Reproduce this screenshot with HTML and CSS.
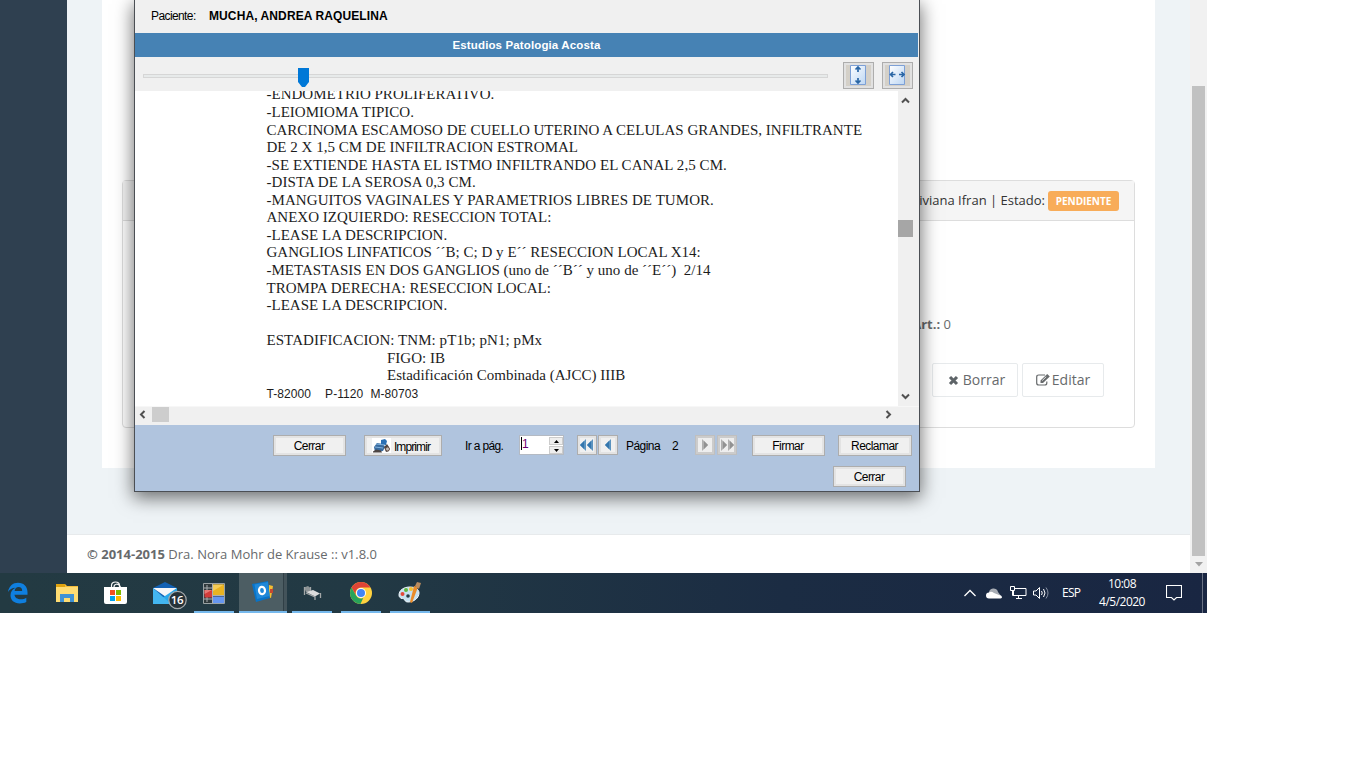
FILE: index.html
```html
<!DOCTYPE html>
<html lang="es">
<head>
<meta charset="utf-8">
<title>Estudios Patologia Acosta</title>
<link rel="stylesheet" href="styles.css">
</head>
<body>
<div class="desktop">
  <div class="browser">
    <aside class="sidebar"></aside>
    <main class="page">
      <div class="panel">
        <section class="card">
          <header class="card-head"><span class="owner">Viviana Ifran | Estado:</span><span class="badge">PENDIENTE</span></header>
          <div class="card-body">
            <p class="art"><b>Art.:</b> 0</p>
            <div class="actions">
              <button class="web-btn borrar"><svg width="11" height="11" viewBox="0 0 11 11"><path d="M2 2l7 7M9 2l-7 7" stroke="#5e6468" stroke-width="3.1"/></svg><span>Borrar</span></button>
              <button class="web-btn editar"><svg width="14" height="12" viewBox="0 0 14 12"><path d="M9 1H2.8Q.7 1 .7 3v6q0 2 2.1 2h6q2 0 2-2V7.5" fill="none" stroke="#676a6c" stroke-width="1.2"/><path d="M4.500 9V6.500L11.200 0l2.600 2.500L7 9z" fill="#676a6c"/><path d="M6.200 6.600l4-3.900" stroke="#fff" stroke-width=".8"/></svg><span>Editar</span></button>
            </div>
          </div>
        </section>
      </div>
      <footer class="page-foot"><span><b>© 2014-2015</b> Dra. Nora Mohr de Krause :: v1.8.0</span></footer>
    </main>
    <div class="page-scroll"><div class="page-thumb"></div><svg width="8" height="5" viewBox="0 0 8 5"><path d="M0 0h8L4 4.5z" fill="#a3a3a3"/></svg></div>
  </div>

  <div class="dialog">
    <div class="patient"><span class="p-label">Paciente:</span><b class="p-name">MUCHA, ANDREA RAQUELINA</b></div>
    <h1 class="title"><span>Estudios Patologia Acosta</span></h1>
    <div class="zoom-row">
      <div class="track"><svg class="handle" width="11" height="19" viewBox="0 0 11 19"><path d="M0 0h11v14l-4 5H4l-4-5z" fill="#0078d7"/></svg></div>
      <button class="fit fit-v"><svg width="25" height="21" viewBox="0 0 25 21"><defs><linearGradient id="sheet" x2="1" y2="1"><stop offset="0" stop-color="#fff"/><stop offset="1" stop-color="#bcd6f3"/></linearGradient></defs><path d="M0 0h25v21H0z" fill="#d4d0c8"/><path d="M4.500.5h15v19h-15z" fill="url(#sheet)" stroke="#7da0d6"/><path d="M12 2v5M9.500 4.500L12 2l2.500 2.500M12 13v5M9.500 15.500L12 18l2.500-2.500" fill="none" stroke="#2a66a5" stroke-width="1.700"/></svg></button>
      <button class="fit fit-h"><svg width="25" height="21" viewBox="0 0 25 21"><path d="M0 0h25v21H0z" fill="#d4d0c8"/><path d="M4.500.5h15v19h-15z" fill="url(#sheet)" stroke="#7da0d6"/><path d="M5.500 9.500h5M8 7L5.500 9.500 8 12M14 9.500h5M16.500 7L19 9.500 16.500 12" fill="none" stroke="#2a66a5" stroke-width="1.700"/></svg></button>
    </div>
    <div class="viewer">
      <div class="doc">
        <p><span>-ENDOMETRIO PROLIFERATIVO.</span></p>
        <p><span>-LEIOMIOMA TIPICO.</span></p>
        <p><span>CARCINOMA ESCAMOSO DE CUELLO UTERINO A CELULAS GRANDES, INFILTRANTE</span></p>
        <p><span>DE 2 X 1,5 CM DE INFILTRACION ESTROMAL</span></p>
        <p class="loose"><span>-SE EXTIENDE HASTA EL ISTMO INFILTRANDO EL CANAL 2,5 CM.</span></p>
        <p class="loose"><span>-DISTA DE LA SEROSA 0,3 CM.</span></p>
        <p class="loose"><span>-MANGUITOS VAGINALES Y PARAMETRIOS LIBRES DE TUMOR.</span></p>
        <p><span>ANEXO IZQUIERDO: RESECCION TOTAL:</span></p>
        <p><span>-LEASE LA DESCRIPCION.</span></p>
        <p><span>GANGLIOS LINFATICOS ´´B; C; D y E´´ RESECCION LOCAL X14:</span></p>
        <p><span>-METASTASIS EN DOS GANGLIOS (uno de ´´B´´ y uno de ´´E´´)&nbsp; 2/14</span></p>
        <p><span>TROMPA DERECHA: RESECCION LOCAL:</span></p>
        <p><span>-LEASE LA DESCRIPCION.</span></p>
        <p>&nbsp;</p>
        <p class="loose"><span>ESTADIFICACION: TNM: pT1b; pN1; pMx</span></p>
        <p class="in"><span>FIGO: IB</span></p>
        <p class="in"><span>Estadificación Combinada (AJCC) IIIB</span></p>
        <p class="codes"><span>T-82000</span><span>P-1120</span><span>M-80703</span></p>
      </div>
      <div class="vscroll">
        <svg width="9" height="7" viewBox="0 0 9 7"><path d="M1 5.500l3.500-3.500L8 5.500" fill="none" stroke="#505050" stroke-width="2"/></svg>
        <div class="vthumb"></div>
        <svg width="9" height="7" viewBox="0 0 9 7"><path d="M1 1.500L4.500 5 8 1.500" fill="none" stroke="#505050" stroke-width="2"/></svg>
      </div>
    </div>
    <div class="hscroll">
      <svg width="7" height="9" viewBox="0 0 7 9"><path d="M5.500 1L2 4.500 5.500 8" fill="none" stroke="#505050" stroke-width="2"/></svg>
      <div class="hthumb"></div>
      <svg width="7" height="9" viewBox="0 0 7 9"><path d="M1.500 1L5 4.500 1.500 8" fill="none" stroke="#505050" stroke-width="2"/></svg>
    </div>
    <div class="bar">
      <div class="bar-row">
        <button class="btn w-std"><span>Cerrar</span></button>
        <button class="btn w-print"><svg width="19" height="15" viewBox="0 0 19 15"><path d="M0 0h19v15H0z" fill="#fff"/><path d="M2 9l3-4 6 1 2 3-2 4-8 1z" fill="#396b9f"/><path d="M9 2l4-1 2 2-1 4H9z" fill="#2b70b4"/><path d="M4 6l9 1M3 9l8 1" stroke="#81b2dd"/><path d="M1 13.500l3-2 5 1 1 2H1zM12 9l3-3 2 3v4l-3 1" fill="#4c4442"/><circle cx="15.500" cy="11" r="2" fill="#c5bdb6" stroke="#665048"/></svg><span class="print-label">Imprimir</span></button>
        <label class="goto">Ir a pág.</label>
        <div class="spinner"><span class="val">1</span><div class="steps"><i><svg width="5" height="3" viewBox="0 0 5 3"><path d="M0 3h5L2.500 0z"/></svg></i><i><svg width="5" height="3" viewBox="0 0 5 3"><path d="M0 0h5L2.500 3z"/></svg></i></div></div>
        <button class="nav first"><svg width="14" height="12" viewBox="0 0 14 12"><path d="M6 0v12L0 6zM13 0v12L7 6z" fill="#5b93bf"/><path d="M4 2v8L0 6zM11 2v8L7 6z" fill="#3476ad"/></svg></button>
        <button class="nav prev"><svg width="8" height="12" viewBox="0 0 8 12"><path d="M7 0v12L1 6z" fill="#5b93bf"/><path d="M5 2v8L1 6z" fill="#3476ad"/></svg></button>
        <span class="pg">Página</span><span class="pgn">2</span>
        <button class="nav off next"><svg width="8" height="12" viewBox="0 0 8 12"><path d="M1 0v12l6-6z" fill="#b0b0b0"/><path d="M3 2v8l4-4z" fill="#929292"/></svg></button>
        <button class="nav off last"><svg width="14" height="12" viewBox="0 0 14 12"><path d="M1 0v12l6-6zM8 0v12l6-6z" fill="#b0b0b0"/><path d="M3 2v8l4-4zM10 2v8l4-4z" fill="#929292"/></svg></button>
        <button class="btn w-std firmar"><span>Firmar</span></button>
        <button class="btn w-rec"><span>Reclamar</span></button>
      </div>
      <div class="bar-row second"><button class="btn w-std"><span>Cerrar</span></button></div>
    </div>
  </div>

  <div class="taskbar">
    <div class="apps">
      <div class="app"><svg width="22" height="22" viewBox="0 0 22 22"><path d="M1 10C2 4 6 .8 11 .8c6 0 9.500 4 9.500 9.500v2.500H7.500c.3 3 3 4.500 6.300 4.500 2 0 4-.6 5.500-1.600v4.400c-2 1-4 1.300-6.500 1.300C7 21.400 3.500 18 3.500 13.200c0-3.400 2-6.200 5-7.500C5 5.800 2.500 7.500 1 10zM7.600 9h7.600c0-2.500-1.300-4-3.600-4-2.200 0-3.600 1.600-4 4z" fill="#0f7fdf"/></svg></div>
      <div class="app"><svg width="22" height="18" viewBox="0 0 22 18"><path d="M0 0h9l2 2h11v16H0z" fill="#f5bd3a"/><path d="M0 3h22v15H0z" fill="#ffdc72"/><path d="M0 0h9v3H0z" fill="#e0a30f"/><path d="M4 18v-8h14v8h-4v-4H8v4z" fill="#3f91d4"/></svg></div>
      <div class="app"><svg width="24" height="24" viewBox="0 0 24 24"><path d="M7.500 8V4.500C7.500 2 9.500 1 11.500 1s4 1 4 3.500V8M10 6c0-3 4-4 6-1l1 3" fill="none" stroke="#f4f4f4" stroke-width="1.200"/><path d="M0 6h23v15q0 2-2 2H2q-2 0-2-2z" fill="#fff"/><path d="M6 9h5v5H6z" fill="#f25022"/><path d="M12 9h5v5h-5z" fill="#7fba00"/><path d="M6 15h5v5H6z" fill="#00a4ef"/><path d="M12 15h5v5h-5z" fill="#ffb900"/></svg></div>
      <div class="app mail"><svg width="34" height="28" viewBox="0 0 34 28"><path d="M0 6L12 0l12 6v16H0z" fill="#1261b4"/><path d="M0 6h24l-11 9z" fill="#f5f6f8"/><path d="M24 6v16H0z" fill="#28a8ea"/><path d="M0 22V6l18 16z" fill="#43b6f0"/><circle cx="24.500" cy="18" r="8.700" fill="#273238" stroke="#a5aaad" stroke-width="1.200"/></svg><b class="count">16</b></div>
      <div class="app run"><svg width="22" height="21" viewBox="0 0 22 21"><path d="M.5.5h21v20H.5z" fill="#30393c" stroke="#9aa2a4"/><path d="M4 2v17M1 5h8M1 16h8M9.500 1v19M10 12.500h11" stroke="#abb0b2"/><path d="M10 1.500h11v10.500H10z" fill="#e9b321"/><path d="M10 1.500h11L10 8z" fill="#f4cd58"/><path d="M1.500 7H9v7.500H1.500z" fill="#d43c3b"/><path d="M1.500 7H9l-7.500 4z" fill="#e87a76"/><path d="M10 13.500h11V20H10z" fill="#6696ef"/></svg></div>
      <div class="app run active"><svg width="22" height="22" viewBox="0 0 22 22"><path d="M17 4l4 1-2 12-3-1z" fill="#f4bd31"/><path d="M18 8h3v4h-3z" fill="#c74831"/><path d="M0 3L16 0l2 17-14 4z" fill="#0873c8"/><path d="M2.500 3.500L16 1l1.500 14L5 18z" fill="#2088d8"/><ellipse cx="10" cy="9.500" rx="3" ry="3.700" fill="none" stroke="#fff" stroke-width="2.200" transform="rotate(-8 10 9.500)"/></svg></div>
      <div class="app run"><svg width="20" height="17" viewBox="0 0 20 17"><path d="M2 2.500l4-1.500 3 2.500v3L4 7z" fill="#8d9395"/><path d="M4 7l7-2 7 3.500-5 3z" fill="#dcdcdc"/><path d="M2.500 2v8M4 8l9 4v3M18.500 8v5M8.500 2v3" fill="none" stroke="#a2a6a7" stroke-width="1.300"/></svg></div>
      <div class="app run"><svg width="22" height="22" viewBox="0 0 22 22"><circle cx="11" cy="11" r="11" fill="#ffd23f"/><path d="M1.500 5.500A11 11 0 0 1 20.500 5.500H11a5.500 5.500 0 0 0-5 7.700z" fill="#de4436"/><path d="M1.500 5.500L6.200 13.700a5.500 5.500 0 0 0 7 2.200L10.500 22A11 11 0 0 1 1.500 5.500z" fill="#28a35a"/><circle cx="11" cy="11" r="5" fill="#fff"/><circle cx="11" cy="11" r="4" fill="#4285f4"/></svg></div>
      <div class="app run"><svg width="24" height="24" viewBox="0 0 24 24"><path d="M1 14C1 9 6 6 12 6c5 0 9 2 9 6 0 5-5 9-11 9-3 0-3-2-4-3s-5 0-5-4z" fill="#c6e2f1" stroke="#eff6fa"/><circle cx="4.500" cy="13" r="2" fill="#e44939"/><circle cx="8" cy="9" r="2" fill="#60b843"/><circle cx="13" cy="8" r="2" fill="#f4c033"/><circle cx="10" cy="15" r="1.800" fill="#263c45"/><path d="M20 6l-6 16-2-1 4-16z" fill="#ea8c2a"/><path d="M17 5l2-4 4 1-2 6z" fill="#b98b5e"/></svg></div>
    </div>
    <div class="tray">
      <svg width="12" height="8" viewBox="0 0 12 8"><path d="M.5 7L6 1.500 11.500 7" fill="none" stroke="#fff" stroke-width="1.300"/></svg>
      <svg class="cloud" width="16" height="11" viewBox="0 0 16 11"><path d="M3 5a4.500 4 0 0 1 9-1l3 4H3z" fill="#a8adb5"/><path d="M3 10.500a3 3 0 0 1 0-6q2-1.500 5 .5l5 2q3 .5 3 2t-3 1.500z" fill="#fff"/></svg>
      <svg class="net" width="17" height="14" viewBox="0 0 17 14"><path d="M5 2.500h11v7H3.500V5M8.500 9.500V12.500M6 12.500h6M.5.5h4v4h-4zM2.500 4.500v5H5" fill="none" stroke="#fff"/></svg>
      <svg class="vol" width="16" height="14" viewBox="0 0 16 14"><path d="M.5 5H3l3.500-3.500v11L3 9H.5z" fill="none" stroke="#fff"/><path d="M8.500 5q1.500 2 0 4M10.500 3q3 4 0 8" fill="none" stroke="#fff"/><path d="M13 1.500q4 5.500 0 11" fill="none" stroke="#8790a2"/></svg>
      <span class="lang">ESP</span>
      <div class="clock"><span>10:08</span><span>4/5/2020</span></div>
      <svg class="note" width="16" height="16" viewBox="0 0 16 16"><path d="M.5.5h15v12h-5L8 15l-2.500-2.500h-5z" fill="none" stroke="#fff" stroke-width="1.100"/></svg>
      <i class="peek"></i>
    </div>
  </div>
</div>
</body>
</html>
```
FILE: styles.css
```css
* { box-sizing: border-box; }
body { margin: 0; background: #fff; }
p, h1 { margin: 0; }
svg { display: block; flex: none; }
button { padding: 0; margin: 0; border-radius: 0; font: inherit; color: inherit; flex: none; }
.desktop { position: relative; width: 1207px; height: 613px; overflow: hidden; display: flex; flex-direction: column; }

/* browser page */
.browser { display: flex; height: 573px; font-family: "Open Sans", sans-serif; font-size: 13px; color: #676a6c; }
.sidebar { width: 67px; background: #2f4050; }
.page { flex: 1; display: flex; flex-direction: column; background: #eef3f6; }
.panel { margin: 0 35px; height: 468px; padding: 180px 20px 0; background: #fff; }
.card { height: 248px; border: 1px solid #ddd; border-radius: 4px; }
.card-head { height: 40px; display: flex; align-items: center; justify-content: flex-end; padding-right: 15px; background: #f5f5f5; border-bottom: 1px solid #ddd; color: #333; }
.owner { padding-bottom: 2px; }
.badge { width: 71px; height: 20px; margin-left: 3px; border-radius: 3px; background: #f8ac59; color: #fff; font-size: 10px; font-weight: 700; line-height: 21px; text-align: center; letter-spacing: -.05px; }
.card-body { display: flex; flex-direction: column; align-items: flex-end; }
.art { margin-top: 93px; margin-right: 183px; line-height: 20px; }
.actions { display: flex; gap: 4px; margin: 29px 30px 0 0; }
.web-btn { height: 34px; display: flex; align-items: center; justify-content: center; gap: 4px; border: 1px solid #e7eaec; border-radius: 2px; background: #fff; font-size: 14px; }
.web-btn span { padding-bottom: 2px; }
.borrar { width: 86px; padding-left: 3px; }
.editar { width: 82px; gap: 2px; }
.page-foot { margin-top: auto; height: 39px; display: flex; align-items: center; padding-left: 20px; background: #fff; border-top: 1px solid #e7eaec; letter-spacing: .01px; }
.page-scroll { width: 17px; display: flex; flex-direction: column; align-items: center; padding-top: 86px; background: #f1f1f1; }
.page-thumb { width: 13px; height: 470px; margin-bottom: 6px; background: #c1c1c1; }

/* report window */
.dialog { position: absolute; left: 134px; top: 0; width: 786px; height: 492px; display: flex; flex-direction: column; border: 1px solid #4b4f54; border-top: 0; background: #f0f0f0; box-shadow: 0 5px 17px 1px rgba(0,0,0,.55); font-family: "Liberation Sans", Arial, sans-serif; font-size: 12px; color: #000; white-space: nowrap; }
.patient { height: 33px; display: flex; align-items: center; padding: 0 0 1px 16px; }
.p-label { width: 58px; letter-spacing: -.6px; }
.p-name { letter-spacing: .1px; }
.title { width: 783px; height: 24px; display: flex; align-items: center; justify-content: center; background: #4682b4; color: #fff; font-size: 11.500px; letter-spacing: .13px; }
.zoom-row { height: 34px; display: flex; padding: 5px 5px 0 8px; }
.track { position: relative; width: 685px; height: 4px; margin: 12px 15px 0 0; border: 1px solid #d6d6d6; background: #e7eaea; }
.handle { position: absolute; left: 154px; top: -7px; }
.fit { width: 31px; height: 27px; display: flex; align-items: center; justify-content: center; border: 1px solid #adadad; background: #e1e1e1; }
.fit-h { margin-left: 8px; }
.viewer { height: 315px; display: flex; }
.doc { width: 763px; padding: 0 0 0 131.500px; overflow: hidden; background: #fff; font-family: "Liberation Serif", "Times New Roman", serif; font-size: 15px; line-height: 17.570px; letter-spacing: .01px; color: #1c1c1c; }
.doc p:first-child { margin-top: -4.600px; }
.doc .loose { letter-spacing: .06px; }
.doc .in { padding-left: 120.500px; }
.doc .codes { display: flex; letter-spacing: .08px; font-family: "Liberation Sans", Arial, sans-serif; font-size: 12px; padding-top: 1px; }
.codes span:nth-child(2) { margin-left: 14px; }
.codes span:nth-child(3) { margin-left: 7px; }
.vscroll { width: 15px; display: flex; flex-direction: column; align-items: center; padding-top: 6px; }
.vthumb { width: 15px; height: 17px; margin: 116px 0 156px; background: #a6a6a6; }
.hscroll { height: 19px; display: flex; align-items: center; padding-left: 4px; padding-bottom: 4px; border-top: 1px solid #f7f7f7; }
.hthumb { width: 17px; height: 15px; margin: 0 716px 0 6px; background: #cdcdcd; }
.bar { flex: 1; padding-top: 10px; background: #b0c4de; }
.bar-row { height: 21px; display: flex; padding-left: 138px; letter-spacing: -.55px; }
.second { margin-top: 10px; padding-left: 698px; }
.btn { height: 21px; display: flex; align-items: center; justify-content: center; gap: 4px; border: 1px solid #adadad; background: #f0f0f0; box-shadow: inset 0 0 0 2px #e3e3e3; letter-spacing: inherit; }
.btn > span { margin-left: -1px; }
.w-std { width: 73px; }
.w-print { width: 78px; margin-left: 18px; }
.print-label { letter-spacing: -.9px; padding: 2px 5px 0 0; }
.w-print svg { margin-left: 1px; }
.w-rec { width: 74px; margin-left: 13px; }
.goto { width: 54px; margin-left: 23px; line-height: 22px; letter-spacing: -.65px; }
.spinner { width: 45px; height: 20px; display: flex; border: 1px solid #b4bac3; background: #fff; }
.val { width: 28px; height: 13px; margin: 1px 0 0 1px; border-left: 1px solid #000; line-height: 15px; color: #6b0070; }
.steps { width: 14px; display: flex; flex-direction: column; gap: 1px; padding-top: 1px; }
.steps i { height: 8px; display: flex; align-items: center; justify-content: center; border: 1px solid #ccc; background: #eee; }
.nav { width: 20px; height: 20px; display: flex; align-items: center; justify-content: center; border: 1px solid #adadad; background: #f0f0f0; box-shadow: inset 0 0 0 2px #e3e3e3; }
.first { margin-left: 13px; }
.prev { margin-left: 1px; }
.off { border-color: #bfbfbf; background: #eee; box-shadow: inset 0 0 0 2px #ccc; }
.pg { width: 46px; margin-left: 8px; line-height: 22px; }
.pgn { width: 23px; line-height: 22px; }
.last { margin-left: 2px; }
.firmar { margin-left: 15px; }

/* taskbar */
.taskbar { height: 40px; display: flex; justify-content: space-between; background: linear-gradient(90deg, #233a42 0, #223944 30%, #1b2c43 65%, #192642 100%); color: #fff; font-family: "Open Sans", sans-serif; }
.apps { display: flex; gap: 1px; margin-left: -6px; }
.app { position: relative; width: 48px; height: 40px; display: flex; align-items: center; justify-content: center; }
.app.run::after { content: ""; position: absolute; left: 4px; right: 4px; bottom: 0; height: 2px; background: #76b9ed; }
.app.active { background: linear-gradient(90deg, #4c5d63 44px, #303f46 44px, #303f46 45px, #43535a 45px); }
.app.active svg { margin-top: -2px; }
.app.active::after { left: 0; right: 0; }
.mail svg { margin: 5px 0 0 9px; }
.count { position: absolute; left: 27px; top: 18px; width: 18px; font-size: 11.500px; font-weight: 600; line-height: 18px; text-align: center; letter-spacing: -.3px; }
.tray { display: flex; align-items: center; font-size: 12px; }
.cloud { margin-left: 10px; }
.net { margin-left: 8px; }
.vol { margin-left: 6px; }
.lang { width: 20px; margin: 0 0 2px 13px; font-size: 12px; letter-spacing: -.7px; }
.clock { width: 60px; margin: 0 0 1px 10px; display: flex; flex-direction: column; align-items: center; line-height: 18px; font-size: 12px; letter-spacing: -.5px; }
.note { margin-left: 14px; }
.peek { width: 1px; height: 40px; margin: 0 4px 0 20px; background: #6a7284; }
```
